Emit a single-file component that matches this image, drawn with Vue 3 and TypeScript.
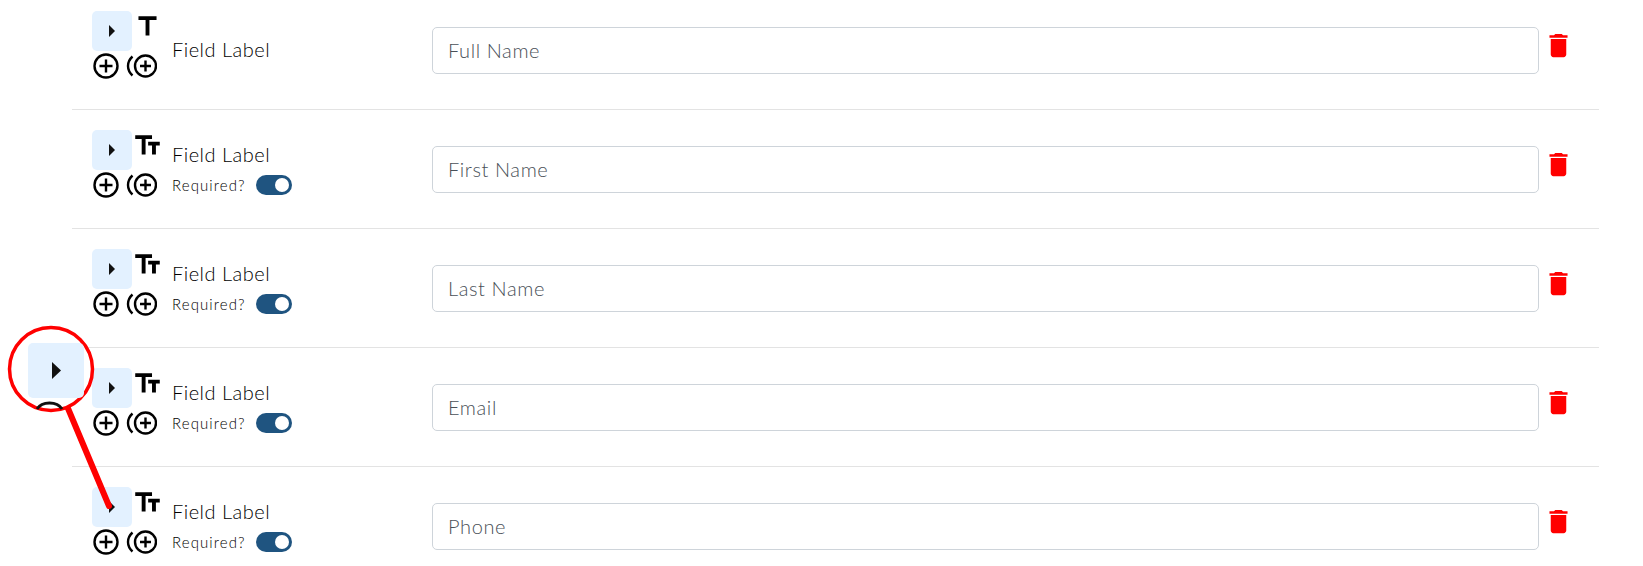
<script setup lang="ts">
const fields = [
  { name: 'Full Name', required: false },
  { name: 'First Name', required: true },
  { name: 'Last Name', required: true },
  { name: 'Email', required: true },
  { name: 'Phone', required: true },
];
</script>

<template>
  <div class="page">
    <div class="field-list">
      <div v-for="field in fields" :key="field.name" class="field-row">
        <div class="tools">
          <div class="tools-top">
            <button class="handle" type="button">
              <span class="caret"></span>
            </button>
            <svg class="type-icon" viewBox="0 0 24 24">
              <path v-if="field.required" d="M2.5 4v3h5v12h3V7h5V4h-13zm19 5h-9v3h3v7h3v-7h3V9z" />
              <path v-else d="M5 4v3h5.5v12h3V7H19V4z" />
            </svg>
          </div>
          <div class="tools-bottom">
            <svg class="add-icon" viewBox="0 0 26 26">
              <circle cx="13" cy="13" r="11.5" />
              <path d="M13 6.5v13M6.5 13h13" />
            </svg>
            <svg class="add-nested-icon" viewBox="0 0 31 26">
              <path class="crescent" d="M6.5 3.500C0.500 9 0.500 17 6.500 22.500" />
              <circle cx="19.5" cy="13" r="10.5" />
              <path d="M19.5 7.5v11M14 13h11" />
            </svg>
          </div>
        </div>
        <div class="label-col">
          <div class="field-label">Field Label</div>
          <div v-if="field.required" class="required">
            <span>Required?</span>
            <span class="switch"><span class="knob"></span></span>
          </div>
        </div>
        <input class="field-input" type="text" :placeholder="field.name" />
        <svg class="trash" viewBox="0 0 24 24">
          <path d="M6 19c0 1.1.9 2 2 2h8c1.1 0 2-.9 2-2V7H6v12zM19 4h-3.5l-1-1h-5l-1 1H5v2h14V4z" />
        </svg>
      </div>
    </div>

    <!-- callout over the 4th row handle -->
    <svg class="callout" viewBox="0 0 130 530" width="130" height="530">
      <line x1="67" y1="406" x2="109" y2="506" stroke="#ff0000" stroke-width="6" stroke-linecap="round" />
      <circle cx="51" cy="369" r="41.5" fill="#ffffff" stroke="#ff0000" stroke-width="3.5" />
      <rect x="28" y="343" width="56" height="55" rx="5" fill="#e3f1ff" />
      <path d="M52 362l9 8.500-9 8.500z" fill="#111111" />
      <path d="M37 409c5-8 20-8 25 0" fill="none" stroke="#111111" stroke-width="3" />
    </svg>
  </div>
</template>

<style scoped>
.page {
  position: relative;
  height: 566px;
  overflow: hidden;
  padding: 0 44px 0 72px;
  background: #fff;
  font-family: 'Lato', 'Open Sans', sans-serif;
  font-weight: 300;
  color: #000;
}

.field-list {
  margin-top: -9px;
}

.field-row {
  display: flex;
  align-items: flex-start;
  height: 119px;
  box-sizing: border-box;
  padding: 20px 25px 0 20px;
  border-bottom: 1px solid #e3e3e3;
}

.tools {
  width: 68px;
  flex: none;
}

.tools-top {
  display: flex;
  height: 40px;
}

.handle {
  display: flex;
  flex: none;
  align-items: center;
  justify-content: center;
  width: 40px;
  height: 40px;
  padding: 0 1px 0 0;
  border: none;
  border-radius: 5px;
  background: #e3f1ff;
}

.caret {
  width: 0;
  height: 0;
  border-top: 6px solid transparent;
  border-bottom: 6px solid transparent;
  border-left: 6px solid #111;
}

.type-icon {
  width: 31px;
  height: 31px;
  flex: none;
  fill: #000;
}

.tools-bottom {
  display: flex;
  gap: 7px;
  margin: 2px 0 0 1px;
}

.add-icon {
  width: 26px;
  height: 26px;
  flex: none;
  fill: none;
  stroke: #000;
  stroke-width: 2.4;
}

.add-nested-icon {
  width: 31px;
  height: 26px;
  flex: none;
  fill: none;
  stroke: #000;
  stroke-width: 2.4;
}

.label-col {
  flex: none;
  width: 260px;
  box-sizing: border-box;
  margin-left: 12px;
  height: 68px;
  display: flex;
  flex-direction: column;
  justify-content: center;
  padding-top: 8px;
}

.field-label {
  font-size: 20px;
  line-height: 24px;
  letter-spacing: 0.5px;
}

.required {
  display: flex;
  align-items: center;
  gap: 10px;
  margin-top: 9px;
  font-size: 15px;
  line-height: 20px;
  letter-spacing: 1.1px;
}

.switch {
  display: flex;
  justify-content: flex-end;
  align-items: center;
  width: 36px;
  height: 20px;
  box-sizing: border-box;
  padding: 0 3px;
  border-radius: 10px;
  background: #1f5480;
}

.knob {
  width: 14px;
  height: 14px;
  border-radius: 50%;
  background: #fff;
}

.field-input {
  flex: 1;
  min-width: 0;
  height: 47px;
  box-sizing: border-box;
  margin: 16px 0 0;
  padding: 0 15px 2px;
  border: 1px solid #ced4da;
  border-radius: 5px;
  font-family: inherit;
  font-size: 20px;
  font-weight: 300;
  letter-spacing: 0.6px;
  background: #fff;
}

.field-input::placeholder {
  color: #495057;
  opacity: 1;
}

.trash {
  width: 31px;
  height: 31px;
  flex: none;
  margin: 19px 0 0 4px;
  fill: #ff0000;
}

.callout {
  position: absolute;
  left: 0;
  top: 0;
}
</style>

<style>
html,
body {
  margin: 0;
  overflow: hidden;
}
</style>
